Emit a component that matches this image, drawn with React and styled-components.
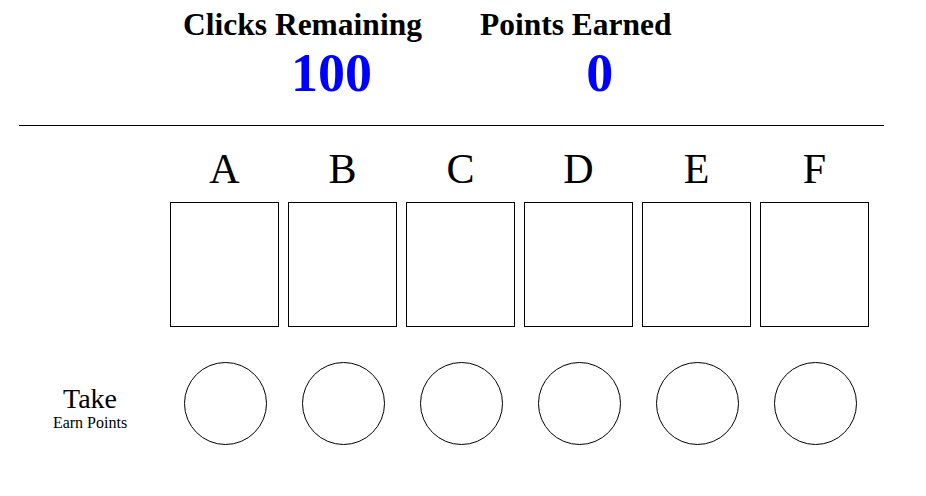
import React from "react";
import styled, { createGlobalStyle } from "styled-components";

const Global = createGlobalStyle`
  html, body { margin: 0; padding: 0; background: #fff; }
  body { font-family: "Liberation Serif", "Times New Roman", serif; color: #000; }
`;

const Page = styled.div`
  width: 926px;
  padding-top: 5px;
`;

const Stats = styled.div`
  display: grid;
  grid-template-columns: auto auto;
  justify-content: start;
  column-gap: 58px;
  margin-left: 183px;
`;

const Stat = styled.div`
  display: flex;
  flex-direction: column;
`;

const StatLabel = styled.div`
  font-weight: bold;
  font-size: 31.5px;
  line-height: 40px;
  white-space: nowrap;
`;

const StatValue = styled.div`
  font-weight: bold;
  font-size: 54px;
  line-height: 56px;
  color: #0000ff;
  text-align: center;
  padding-left: ${(p) => p.$shift}px;
`;

const Rule = styled.div`
  margin: 24px 0 0 19px;
  width: 865px;
  border-top: 1px solid #000;
`;

const Board = styled.div`
  display: grid;
  grid-template-columns: 142px repeat(6, 109px);
  grid-template-rows: 48px 125px 135px;
  column-gap: 9px;
  row-gap: 9px;
  margin: 19px 0 0 19px;
`;

const Letter = styled.div`
  font-size: 42px;
  line-height: 48px;
  text-align: center;
`;

const Box = styled.div`
  box-sizing: border-box;
  width: 109px;
  height: 125px;
  border: 1px solid #000;
  background: #fff;
`;

const Circle = styled.div`
  box-sizing: border-box;
  width: 83px;
  height: 83px;
  border: 1px solid #000;
  border-radius: 50%;
  justify-self: center;
  align-self: center;
  margin-left: 2px;
`;

const TakeCell = styled.div`
  align-self: center;
  padding-top: 9px;
  text-align: center;
`;

const TakeTitle = styled.div`
  font-size: 28px;
  line-height: 30px;
`;

const TakeSub = styled.div`
  font-size: 16px;
  line-height: 18px;
`;

const Spacer = styled.div``;

const letters = ["A", "B", "C", "D", "E", "F"];

export default function App() {
  return (
    <Page>
      <Global />
      <Stats>
        <Stat>
          <StatLabel>Clicks Remaining</StatLabel>
          <StatValue $shift={58}>100</StatValue>
        </Stat>
        <Stat>
          <StatLabel>Points Earned</StatLabel>
          <StatValue $shift={48}>0</StatValue>
        </Stat>
      </Stats>
      <Rule />
      <Board>
        <Spacer />
        {letters.map((l) => (
          <Letter key={l}>{l}</Letter>
        ))}
        <Spacer />
        {letters.map((l) => (
          <Box key={l} />
        ))}
        <TakeCell>
          <TakeTitle>Take</TakeTitle>
          <TakeSub>Earn Points</TakeSub>
        </TakeCell>
        {letters.map((l) => (
          <Circle key={l} />
        ))}
      </Board>
    </Page>
  );
}
